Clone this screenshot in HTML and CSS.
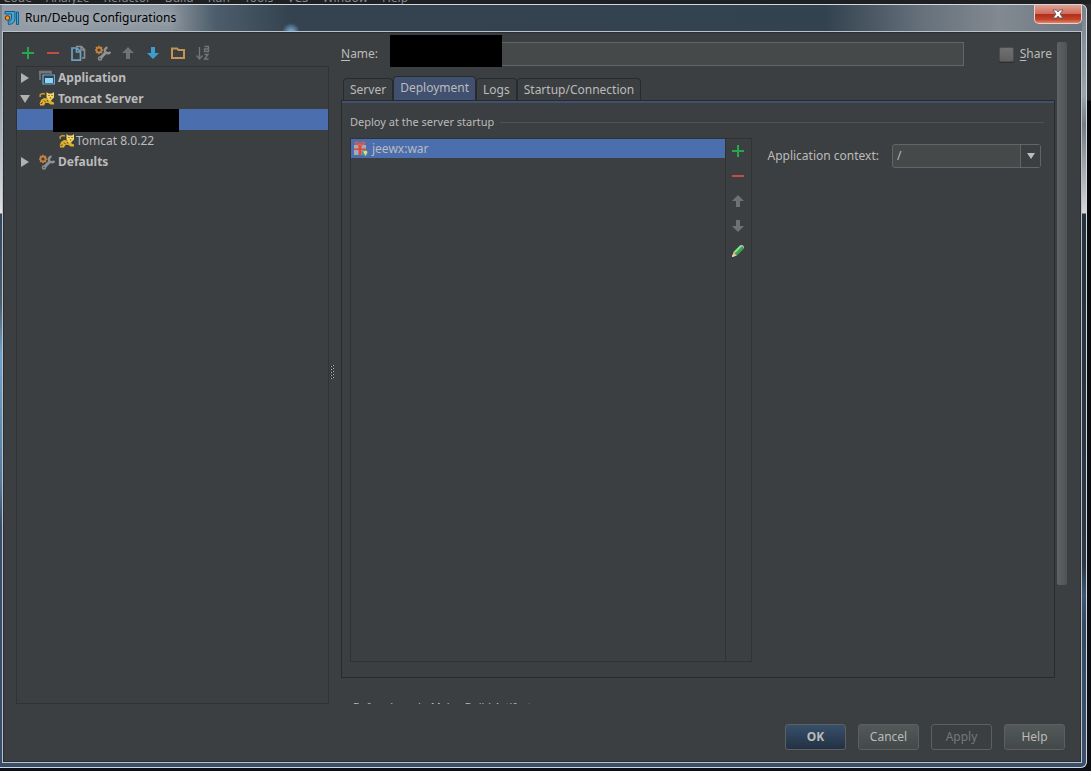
FILE: index.html
```html
<!DOCTYPE html>
<html lang="en">
<head>
<meta charset="utf-8">
<title>Run/Debug Configurations</title>
<link rel="stylesheet" href="styles.css">
</head>
<body>
<svg class="symbols" aria-hidden="true">
  <symbol id="i-plus" viewBox="0 0 16 16"><path d="M2 7h5V2h2v5h5v2H9v5H7V9H2z" fill="#28a64c"/></symbol>
  <symbol id="i-minus" viewBox="0 0 16 16"><path d="M2 7h12v2H2z" fill="#c74b44"/></symbol>
  <symbol id="i-up" viewBox="0 0 16 16"><path d="M8 2l6 6h-4v6H6V8H2z" fill="#707172"/></symbol>
  <symbol id="i-down" viewBox="0 0 16 16"><path d="M8 14L2 8h4V2h4v6h4z" fill="currentColor"/></symbol>
  <symbol id="i-tools" viewBox="0 0 16 16">
    <path d="M4 .8v1.600M4 7.600v1.600M-.2 5h1.600M6.600 5h1.600M1 2l1.200 1.200M7 2L5.800 3.200M1 8l1.200-1.200M7 8L5.800 6.800" stroke="#c4803e" stroke-width="1.600"/>
    <circle cx="4" cy="5" r="2.500" fill="none" stroke="#c4803e" stroke-width="1.800"/>
    <path d="M12.500 2.500a2.900 2.900 0 1 0 2.800 4.300" fill="none" stroke="#8e9193" stroke-width="2.400"/>
    <path d="M10.800 7.500L5.500 13" stroke="#8e9193" stroke-width="3"/>
    <circle cx="5" cy="13.500" r="2.200" fill="#8e9193"/>
    <circle cx="4.900" cy="13.500" r=".8" fill="#3c3f41"/>
  </symbol>
  <symbol id="i-cat" viewBox="0 0 16 16">
    <path d="M8.500 7.500L12 9l.5 1.500 2.500 1v2h-3.500L9.500 12l-3-.2L5 14.500H1V13h2l.8-2.500L2 12.500.5 13l1.500-4L5 7z" fill="#e0b02a"/>
    <path d="M1.200 6V3.600L3.500 2.500 6 3" fill="none" stroke="#c79b28" stroke-width="1.500"/>
    <path d="M7.500 1l2 1.500H13L15 1v5.500l-3 3h-1.500l-3-3z" fill="#f5d565"/>
    <path d="M9.500 4.500h1M12.500 4.500h1M10.800 7h1.400M5 9.500l1.500 1.500M8 9l1 1.500" stroke="#54431b"/>
  </symbol>
</svg>
<div class="menu-strip">
  <span>Code</span><span>Analyze</span><span>Refactor</span><span>Build</span><span>Run</span><span>Tools</span><span>VCS</span><span>Window</span><span>Help</span>
</div>
<main class="window">
  <header class="titlebar">
    <svg class="logo" viewBox="0 0 16 16">
      <path d="M1 1.500h10v7q0 5.500-6.500 6l-.5-3q3.500 0 3.500-3.500V4H1z" fill="#39a9dc" stroke="#155a87"/>
      <path d="M12.500 2h2v12.500h-2z" fill="#39a9dc" stroke="#155a87"/>
      <circle cx="3.500" cy="8" r="2.300" fill="#ee9a25" stroke="#573817"/>
    </svg>
    <h1>Run/Debug Configurations</h1>
    <button class="close" aria-label="Close"><svg width="12" height="10" viewBox="0 0 12 10"><path d="M1 1h3.500L6 3l1.500-2H11L8 5l3 4H7.500L6 7 4.500 9H1l3-4z" fill="#fff" stroke="#50545f" stroke-width=".8"/></svg></button>
  </header>
  <div class="client">
    <div class="body">
      <section class="configs">
        <div class="toolbar">
          <button aria-label="Add"><svg><use href="#i-plus"/></svg></button>
          <button aria-label="Remove"><svg><use href="#i-minus"/></svg></button>
          <button aria-label="Copy"><svg viewBox="0 0 16 16"><path d="M6 1.500h5.500l3 3V13H12M11 1.500V5h3.500" fill="none" stroke="#8d9093" stroke-width="1.600"/><path d="M2 3h5l3.500 3.500v8.700H2zM6.500 3v4h4" fill="none" stroke="#6ba1c4" stroke-width="1.700"/></svg></button>
          <button aria-label="Edit defaults"><svg><use href="#i-tools"/></svg></button>
          <button aria-label="Move up"><svg><use href="#i-up"/></svg></button>
          <button class="blue" aria-label="Move down"><svg><use href="#i-down"/></svg></button>
          <button aria-label="New folder"><svg viewBox="0 0 16 16"><path d="M2 13V3.500h5L8.500 5H14v8z" fill="none" stroke="#c19555" stroke-width="2"/></svg></button>
          <button class="sort" aria-label="Sort configurations"><svg viewBox="0 0 16 16"><path d="M4.500 2v12M1.500 10.500l3 3.500 3-3.500" fill="none" stroke="#747678" stroke-width="1.300"/><path d="M9.500 1.500h4v5h-4V4h4M9.500 9.500H13L9.500 14h4" fill="none" stroke="#747678" stroke-width="1.300"/></svg></button>
        </div>
        <ul class="tree" role="tree">
          <li role="treeitem" aria-expanded="false"><svg class="arrow" viewBox="0 0 10 10"><path d="M1 0l8 5-8 5z" fill="#afb1b3"/></svg><svg viewBox="0 0 16 16"><path d="M1 10V1.500h11V4" fill="none" stroke="#85888b" stroke-width="1.300"/><path d="M0 1h12v2.500H0z" fill="#75787b"/><path d="M4 5h11.500v9H4z" fill="#34434d" stroke="#6aaad0" stroke-width="1.200"/><path d="M6 8h8v5H6z" fill="#8ed5fb"/></svg><b>Application</b></li>
          <li role="treeitem" aria-expanded="true"><svg class="arrow" viewBox="0 0 10 10"><path d="M0 1h10L5 9z" fill="#afb1b3"/></svg><svg><use href="#i-cat"/></svg><b>Tomcat Server</b></li>
          <li class="selected" role="treeitem" aria-selected="true"><span class="mask"></span></li>
          <li class="child" role="treeitem"><svg><use href="#i-cat"/></svg><span>Tomcat 8.0.22</span></li>
          <li role="treeitem" aria-expanded="false"><svg class="arrow" viewBox="0 0 10 10"><path d="M1 0l8 5-8 5z" fill="#afb1b3"/></svg><svg><use href="#i-tools"/></svg><b>Defaults</b></li>
        </ul>
      </section>
      <div class="splitter"><svg width="5" height="16" viewBox="0 0 5 16"><path d="M3 0h1v1H3zM1 1h1v1H1zM3 3h1v1H3zM1 4h1v1H1zM3 6h1v1H3zM1 7h1v1H1zM3 9h1v1H3zM1 10h1v1H1zM3 12h1v1H3zM1 13h1v1H1z" fill="#b5b7b9"/><path d="M2 0h1v1H2zM0 1h1v1H0zM2 3h1v1H2zM0 4h1v1H0zM2 6h1v1H2zM0 7h1v1H0zM2 9h1v1H2zM0 10h1v1H0zM2 12h1v1H2zM0 13h1v1H0z" fill="#202224"/></svg></div>
      <section class="editor">
        <div class="name-row">
          <label for="name"><u>N</u>ame:</label>
          <div class="name-field"><input id="name" type="text"><span class="mask"></span></div>
          <label class="share"><input type="checkbox"><span><u>S</u>hare</span></label>
        </div>
        <div class="tabs" role="tablist">
          <button role="tab">Server</button><button role="tab" class="active" aria-selected="true">Deployment</button><button role="tab">Logs</button><button role="tab">Startup/Connection</button>
        </div>
        <div class="panel" role="tabpanel">
          <h2><span>Deploy at the server startup</span></h2>
          <div class="deploy">
            <div class="artifacts">
              <ul><li><svg viewBox="0 0 16 16"><path d="M1 4h12v4H1zM1 9h12v5H1z" fill="#a5abb4"/><path d="M5.500 4h3v10h-3zM1 7.500h12V9H1z" fill="#d8483f"/><path d="M7 4Q2 4 2.500 1.500 5 0 7 4q2-4 4.500-2.500Q12 4 7 4" fill="none" stroke="#e05c50" stroke-width="1.400"/><circle cx="12" cy="12" r="3" fill="#348cc8"/><path d="M10 10.500l3-1 1.500 1.500-2 4z" fill="#f5dc4c"/></svg><span>jeewx:war</span></li></ul>
              <div class="side-tools">
                <button aria-label="Add artifact"><svg><use href="#i-plus"/></svg></button>
                <button aria-label="Remove artifact"><svg><use href="#i-minus"/></svg></button>
                <button aria-label="Move artifact up"><svg><use href="#i-up"/></svg></button>
                <button aria-label="Move artifact down"><svg><use href="#i-down"/></svg></button>
                <button aria-label="Edit artifact"><svg viewBox="0 0 16 16"><path d="M2 14l1.500-5L7 12.500z" fill="#efc48c"/><path d="M2 14l.7-2.500 1.800 1.800z" fill="#ddd"/><path d="M3.500 9l7-7L14 5.500l-7 7z" fill="#3ca553"/><path d="M3.500 9l7-7 1.500 1.300-7 7z" fill="#8be096"/><path d="M10.500 2h2L14 3.500v2z" fill="#b6b8ba"/></svg></button>
              </div>
            </div>
            <div class="context">
              <label for="context">Application context:</label>
              <div class="combo"><input id="context" type="text" value="/"><button aria-label="Show contexts"><svg viewBox="0 0 8 6"><path d="M0 0h8L4 6z" fill="#bbb"/></svg></button></div>
            </div>
          </div>
        </div>
        <div class="before-launch"><span>Before launch: Make, Build Artifact</span></div>
      </section>
      <div class="scrollbar"><div class="thumb"></div></div>
    </div>
    <footer>
      <button class="primary">OK</button><button>Cancel</button><button disabled>Apply</button><button>Help</button>
    </footer>
  </div>
</main>
</body>
</html>
```
FILE: styles.css
```css
* { box-sizing: border-box; }
html, body { height: 100%; }
body {
  margin: 0;
  display: flex;
  flex-direction: column;
  overflow: hidden;
  background: linear-gradient(#2b2d2f 0, #232628 100px, #08090b 101px, #0c0f16 100%);
  color: #bbbbbb;
  font: 12px/18px "Noto Sans", "Open Sans", sans-serif;
}
button, input { font: inherit; color: inherit; }
button { padding: 0; border: 0; background: none; }
svg { width: 16px; height: 16px; display: block; flex: none; }
ul { list-style: none; margin: 0; padding: 0; }
u { text-underline-offset: 2px; }
.symbols { position: absolute; width: 0; height: 0; }
.mask { position: absolute; background: #000; }

.menu-strip {
  flex: none;
  display: flex;
  align-items: flex-end;
  gap: 14px;
  height: 4px;
  padding-left: 3px;
  overflow: hidden;
  background: #1e2022;
  color: #85878a;
  line-height: 12px;
}

.window {
  flex: 1;
  min-height: 0;
  display: flex;
  flex-direction: column;
  margin: 0 4px 3px 0;
  padding: 0 4px 4px 2px;
  border: 1px solid #d3d8de;
  border-left: 0;
  border-radius: 0 6px 6px 0;
  background:
    linear-gradient(#73818e 0, #7d8992 60px, #d9dcde 200px, #e6e6e6 208px, #33465a 209px, #4b6172 300px, #6fa3cc 350px, #54799b 480px, #384e6b 520px, #384e6b 100%) left / 2px 100% no-repeat,
    linear-gradient(#78828c 0, #9aa5ae 90px, #747c86 120px, #d8d6d8 208px, #28323e 209px, #2c3844 560px, #3c5877 590px, #344a62 620px, #3c506e 100%) right / 4px 100% no-repeat,
    radial-gradient(circle, #6c9fc8 2px, transparent 9px) 281px 17px / 20px 20px no-repeat,
    linear-gradient(90deg, #949da5 0, #8b959e 170px, #4d5d6b 215px, #34434f 290px, #33424f 76%, #66717c 85%, #828990 92%, #6b7784 100%) top / 100% 27px no-repeat,
    #394e68;
}
.titlebar { flex: none; display: flex; align-items: center; height: 26px; padding-left: 2px; }
.logo { width: 16px; height: 16px; }
.titlebar h1 {
  flex: 1;
  margin: 0 0 0 5px;
  color: #000;
  font-size: 12px;
  line-height: 20px;
  font-weight: 400;
  text-shadow: 0 0 8px #c5ccd2;
}
.close {
  align-self: flex-start;
  display: grid;
  place-items: center;
  width: 48px;
  height: 19px;
  border: 1px solid #edd0c9;
  border-top: 0;
  border-radius: 0 0 5px 5px;
  background: linear-gradient(#e3a093, #cf6d5c 48%, #b02c18 50%, #c2442d 80%, #e28766);
}
.close svg { width: 12px; height: 10px; }

.client {
  flex: 1;
  min-height: 0;
  display: flex;
  flex-direction: column;
  border: 1px solid #bac1c8;
  background: #3c3f41;
  box-shadow: inset 0 0 0 1px #2a2e32;
}
.body { flex: 1; min-height: 0; display: flex; padding: 10px 14px 0 13px; }
.configs { flex: 0 1 313px; display: flex; flex-direction: column; }
.toolbar { display: flex; gap: 9px; padding: 3px 0 5px 4px; }
.blue { color: #3e9bcd; }
.tree { flex: 1; border: 1px solid #323232; }
.tree li { position: relative; display: flex; align-items: center; height: 21px; padding-left: 3px; }
.tree .arrow { width: 10px; height: 10px; margin-right: 9px; }
.tree li svg + svg { margin-right: 3px; }
.tree .child { padding-left: 42px; gap: 1px; }
.tree .selected { background: #4b6eaf; }
.tree .mask { left: 36px; top: 0; width: 126px; height: 23px; z-index: 1; }
.splitter { flex: none; display: flex; align-items: center; width: 12px; padding-left: 1px; }
.splitter svg { width: 5px; height: 16px; }

.editor { flex: 1; min-width: 0; display: flex; flex-direction: column; }
.name-row { flex: none; display: flex; align-items: center; height: 24px; }
.name-field { position: relative; flex: 1; margin-left: 12px; }
.name-field input { display: block; width: 100%; height: 24px; border: 1px solid #646464; background: #45494a; }
.name-field .mask { left: 0; top: -7px; width: 112px; height: 32px; }
.share { display: flex; align-items: center; gap: 6px; margin: 0 3px 0 35px; }
.share input {
  appearance: none;
  width: 15px;
  height: 15px;
  margin: 0;
  border: 1px solid #4b4d4f;
  border-radius: 2px;
  background: linear-gradient(#707070, #606060);
  box-shadow: 0 1px 0 #2c2e30;
}
.tabs { flex: none; display: flex; align-items: flex-end; margin-top: 10px; padding-left: 2px; }
.tabs button {
  height: 22px;
  padding: 0 6px;
  border: 1px solid #282b2d;
  border-bottom: 0;
  border-radius: 4px 4px 0 0;
  white-space: nowrap;
}
.tabs .active { height: 24px; padding-bottom: 2px; background: #41506f; }
.panel {
  flex: 1;
  min-height: 0;
  display: flex;
  flex-direction: column;
  border: 1px solid #282b2d;
  box-shadow: inset 0 2px 0 #41506f;
  padding: 11px 10px 15px 8px;
}
.panel h2 { display: flex; align-items: center; gap: 6px; margin: 0 0 6px; font-size: 11px; line-height: 20px; font-weight: 400; }
.panel h2::after { content: ""; flex: 1; height: 1px; background: #505254; }
.deploy { flex: 1; min-height: 0; display: flex; gap: 15px; }
.artifacts { flex: 1; display: flex; border: 1px solid #323232; }
.artifacts ul { flex: 1; }
.artifacts li { display: flex; align-items: center; gap: 3px; height: 19px; padding-left: 2px; background: #4b6eaf; }
.side-tools { display: flex; flex-direction: column; align-items: center; gap: 9px; width: 26px; padding: 4px 2px 0 0; border-left: 1px solid #323232; color: #707172; }
.context { display: flex; align-items: center; align-self: flex-start; gap: 13px; padding: 6px 3px 0 0; }
.combo { display: flex; width: 149px; height: 24px; border: 1px solid #646464; border-radius: 3px; background: #45494a; }
.combo input { flex: 1; min-width: 0; padding: 0 4px; border: 0; background: none; }
.combo button { display: grid; place-items: center; width: 20px; border-left: 1px solid #646464; background: #3c3f41; }
.combo svg { width: 8px; height: 6px; }
.before-launch { flex: none; height: 26px; padding: 20px 0 0 12px; overflow: hidden; font-size: 11px; }
.scrollbar { flex: none; width: 12px; padding-left: 2px; }
.thumb { height: 82%; width: 10px; border-radius: 2px; background: linear-gradient(90deg, #606162, #515253); }

footer { flex: none; display: flex; justify-content: flex-end; gap: 12px; padding: 20px 16px 12px; }
footer button { width: 61px; height: 26px; border: 1px solid #5c6062; border-radius: 3px; background: linear-gradient(#535859, #434849); }
footer .primary { background: linear-gradient(#384f6b, #233143); font-weight: 700; }
footer button:disabled { background: none; color: #777777; }
```
